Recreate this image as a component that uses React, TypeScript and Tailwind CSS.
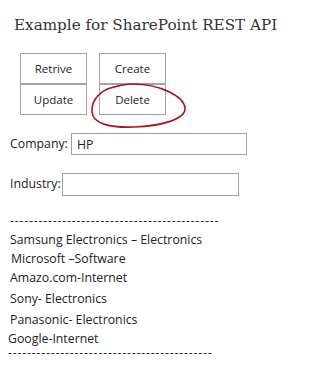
import React from 'react';

const companies = [
    { name: 'Samsung Electronics – Electronics', cls: 'pl-[10px] mt-[1px]' },
    { name: 'Microsoft –Software', cls: 'pl-[11px] mt-[1px]' },
    { name: 'Amazo.com-Internet', cls: 'pl-[10px] mt-[1px]' },
    { name: 'Sony- Electronics', cls: 'pl-[10px] mt-[3px]' },
    { name: 'Panasonic- Electronics', cls: 'pl-[10px] mt-[3px]' },
    { name: 'Google-Internet', cls: 'pl-[8px] mt-[1px]' },
];

const Btn: React.FC<{ label: string }> = ({ label }) => (
    <button className="h-[31px] w-[67px] border border-[#a3a3a3] bg-white text-[11.5px] text-[#222]">
        {label}
    </button>
);

export default function App() {
    return (
        <div className="relative h-[368px] w-[311px] overflow-hidden bg-white font-['Open_Sans','Noto_Sans',sans-serif] text-[#222]">
            {/* Title */}
            <h1 className="pl-[14px] pt-[15px] font-['DejaVu_Serif',serif] text-[15.2px] leading-[20px] text-[#333]">
                Example for SharePoint REST API
            </h1>

            {/* Buttons */}
            <div className="relative ml-[20px] mt-[18px] grid w-fit grid-cols-[67px_67px] gap-x-[12px]">
                <Btn label="Retrive" />
                <Btn label="Create" />
                <Btn label="Update" />
                <Btn label="Delete" />
                {/* hand drawn circle around Delete */}
                <svg
                    className="pointer-events-none absolute left-[69px] top-[29px]"
                    width="100"
                    height="48"
                    viewBox="0 0 100 48"
                >
                    <path
                        d="M30 4 C12 6 2 18 3 30 C4 42 22 46 45 45 C70 44 97 38 96 26 C95 14 70 2 44 2 C36 2 28 4 22 6"
                        fill="none"
                        stroke="#b0101a"
                        strokeWidth="1.6"
                        strokeLinecap="round"
                    />
                </svg>
            </div>

            {/* Form */}
            <div className="mt-[18px] flex items-center pl-[10px] text-[12.3px]">
                <span className="w-[61px]">Company:</span>
                <input
                    defaultValue="HP"
                    className="h-[22px] w-[176px] border border-[#a0a0a0] px-[5px] text-[12.3px] outline-none"
                />
            </div>
            <div className="mt-[18px] flex items-center pl-[10px] text-[12.3px]">
                <span className="w-[52px]">Industry:</span>
                <input className="h-[23px] w-[177px] border border-[#a0a0a0] px-[5px] text-[12.3px] outline-none" />
            </div>

            {/* Result list */}
            <div className="mt-[16px] text-[12.3px] leading-[18px]">
                <div className="pl-[10px] tracking-[0.8px]">--------------------------------------------</div>
                {companies.map(c => (
                    <div key={c.name} className={c.cls}>
                        {c.name}
                    </div>
                ))}
                <div className="pl-[8px] leading-[10px] tracking-[0.8px]">-------------------------------------------</div>
            </div>
        </div>
    );
}
